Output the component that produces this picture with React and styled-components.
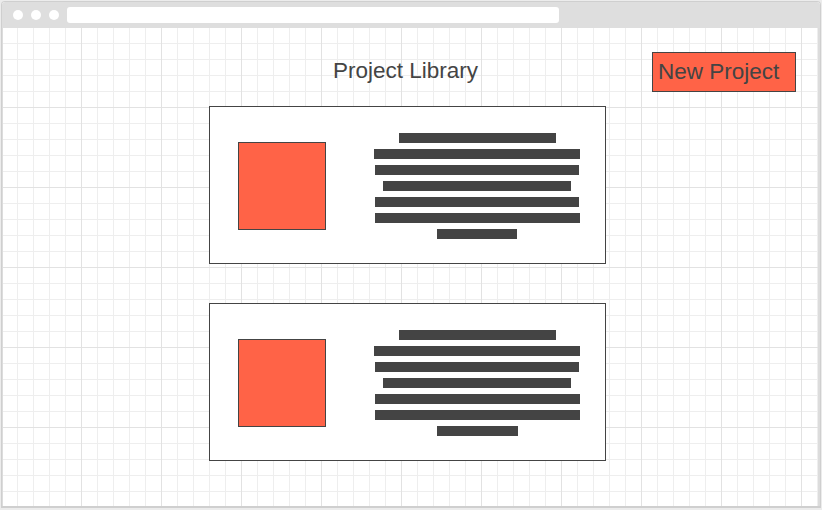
import React from 'react'
import styled, { createGlobalStyle } from 'styled-components'

const GlobalStyle = createGlobalStyle`
    html, body {
        margin: 0;
        padding: 0;
        background: #ececec;
        font-family: "Liberation Sans", Arial, sans-serif;
    }
`

const projects = [
    { id: 1, lines: [157, 206, 204, 188, 204, 205, 80] },
    { id: 2, lines: [157, 206, 204, 188, 205, 205, 81] },
]

function App() {
    return (
        <>
            <GlobalStyle />
            <Frame>
                <TopBar>
                    <Dots>
                        <Dot />
                        <Dot />
                        <Dot />
                    </Dots>
                    <AddressBar />
                </TopBar>
                <Canvas>
                    <Header>
                        <Title>Project Library</Title>
                        <NewButton>New Project</NewButton>
                    </Header>
                    <CardList>
                        {projects.map(p => (
                            <Card key={p.id}>
                                <Thumb />
                                <TextBlock>
                                    {p.lines.map((w, i) => (
                                        <Line key={i} style={{ width: w }} />
                                    ))}
                                </TextBlock>
                            </Card>
                        ))}
                    </CardList>
                </Canvas>
            </Frame>
        </>
    )
}

const Frame = styled.div`
    box-sizing: border-box;
    width: 820px;
    height: 507px;
    margin: 1px 0 0 1px;
    border: 1px solid #cfcfcf;
    border-bottom-width: 2px;
    border-radius: 4px 4px 0 0;
    background: #fff;
    display: flex;
    flex-direction: column;
    overflow: hidden;
`

const TopBar = styled.div`
    height: 26px;
    flex-shrink: 0;
    background: #dedede;
    display: flex;
    align-items: center;
    padding-left: 11px;
`

const Dots = styled.div`
    display: flex;
    gap: 8px;
`

const Dot = styled.span`
    width: 10px;
    height: 10px;
    border-radius: 50%;
    background: #fff;
`

const AddressBar = styled.div`
    width: 492px;
    height: 16px;
    margin-left: 8px;
    border-radius: 3px;
    background: #fff;
`

const Canvas = styled.div`
    flex: 1;
    border-left: 1px solid #dcdcdc;
    border-right: 2px solid #dcdcdc;
    background-color: #fff;
    background-image:
        linear-gradient(to right, #e2e2e2 1px, transparent 1px),
        linear-gradient(to bottom, #e2e2e2 1px, transparent 1px),
        linear-gradient(to right, #eeeeee 1px, transparent 1px),
        linear-gradient(to bottom, #eeeeee 1px, transparent 1px);
    background-size: 80px 80px, 80px 80px, 16px 16px, 16px 16px;
    background-position: 78px 0, 0 79px, 14px 0, 0 15px;
    padding: 24px 0 0 206px;
`

const Header = styled.div`
    display: grid;
    grid-template-columns: 397px auto;
    align-items: start;
    height: 40px;
`

const Title = styled.h1`
    margin: 0;
    padding: 6px 4px 0 0;
    text-align: center;
    font-weight: normal;
    font-size: 22.5px;
    color: #444;
`

const NewButton = styled.button`
    box-sizing: border-box;
    margin-left: 46px;
    width: 144px;
    height: 40px;
    padding: 6px 0 0 5px;
    border: 1px solid #444;
    background: #ff6347;
    color: #444;
    font-family: "Liberation Sans", Arial, sans-serif;
    font-size: 22.5px;
    text-align: left;
    display: flex;
    align-items: flex-start;
`

const CardList = styled.div`
    display: flex;
    flex-direction: column;
    gap: 39px;
    margin-top: 14px;
`

const Card = styled.div`
    box-sizing: border-box;
    width: 397px;
    height: 158px;
    border: 1px solid #444;
    background: #fff;
    display: flex;
    align-items: center;
    padding: 2px 0 0 28px;
`

const Thumb = styled.div`
    box-sizing: border-box;
    width: 88px;
    height: 88px;
    border: 1px solid #444;
    background: #ff6347;
    flex-shrink: 0;
`

const TextBlock = styled.div`
    width: 206px;
    margin-left: 48px;
    display: flex;
    flex-direction: column;
    align-items: center;
    gap: 6px;
`

const Line = styled.div`
    height: 10px;
    background: #444;
`

export default App
